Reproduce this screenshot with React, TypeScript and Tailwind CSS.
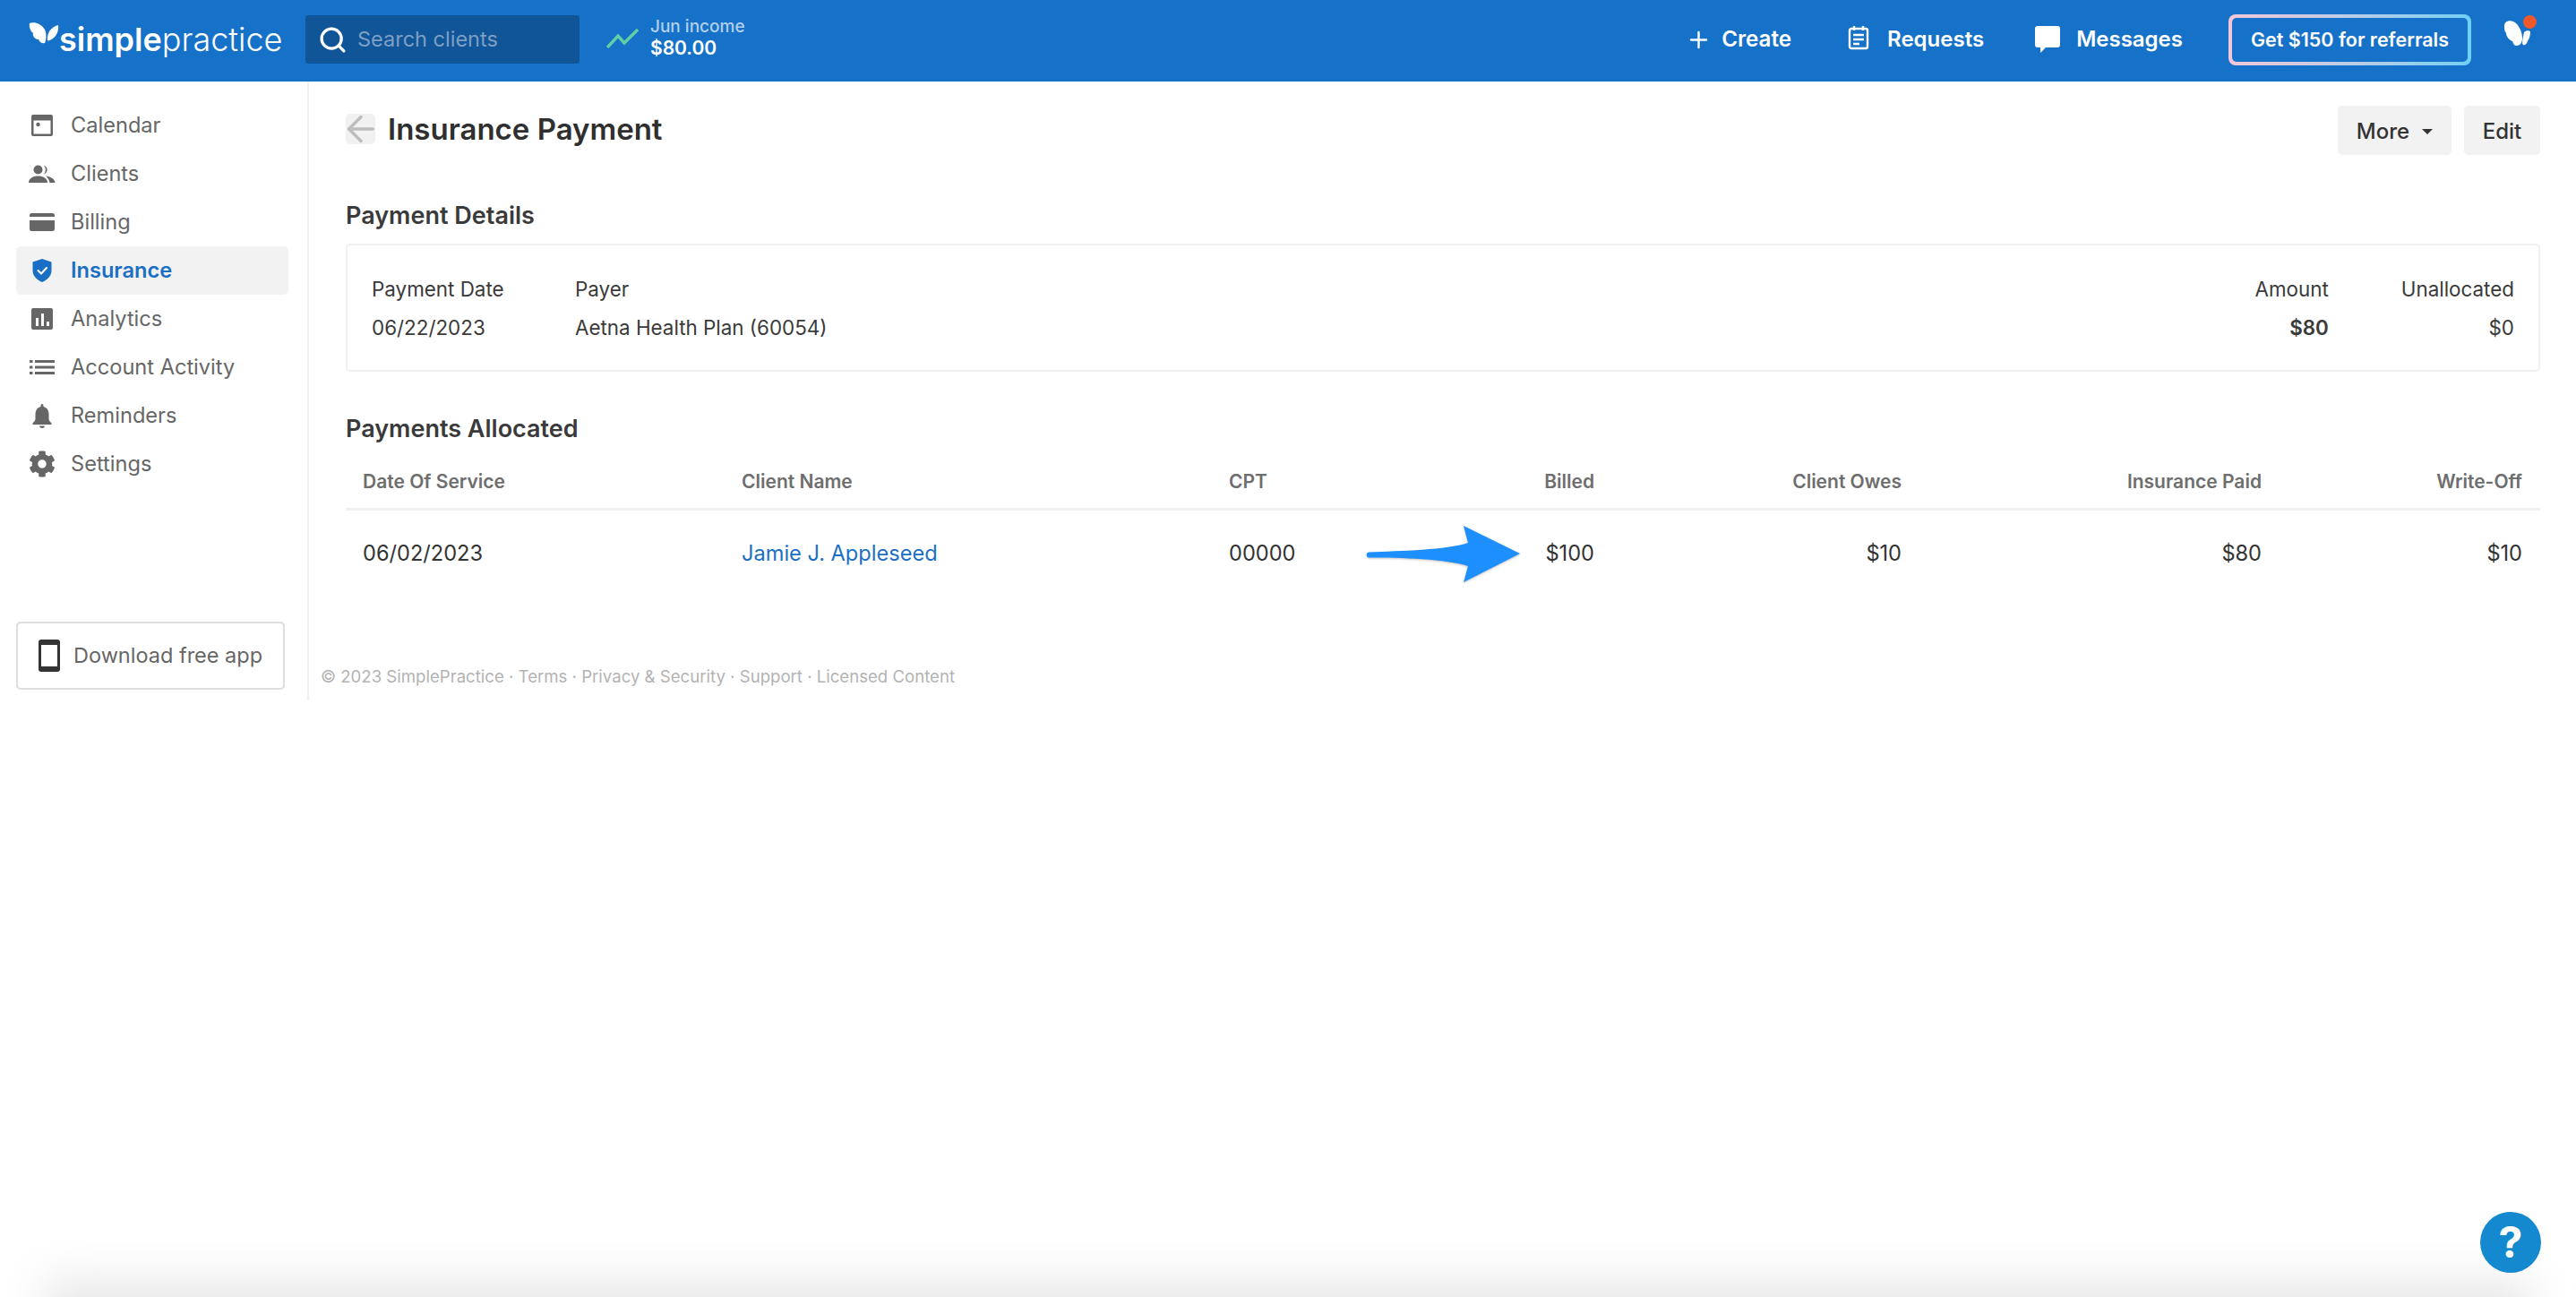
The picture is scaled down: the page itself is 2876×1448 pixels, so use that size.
import React from 'react';
import { Search, Plus, ArrowLeft } from 'lucide-react';

const font = 'font-[Inter,"Liberation_Sans",sans-serif]';

const Butterfly = ({ className }: { className?: string }) => (
  <svg viewBox="0 0 34 24" className={className} fill="currentColor">
    <path d="M1 1 C6 -1 14 1 18 8 C20 12 20 18 18 23 C15 24 12 22 11 19 C7 19 4 15 5 12 C2 10 0 5 1 1 Z" />
    <path d="M21 20 C20 12 25 5 33 3 C34 9 31 15 27 18 C24 20 22 21 21 20 Z" />
  </svg>
);

const CalendarIcon = () => (
  <svg viewBox="0 0 24 24" className="w-[24px] h-[24px]" fill="#666">
    <path fillRule="evenodd" d="M0 2A2 2 0 0 1 2 0h20a2 2 0 0 1 2 2v20a2 2 0 0 1-2 2H2a2 2 0 0 1-2-2zM2.500 6.500V21.500h19V6.500z" />
    <circle cx="7.500" cy="11" r="2.200" />
  </svg>
);

const ClientsIcon = () => (
  <svg viewBox="0 0 30 20" className="w-[30px] h-[20px]" fill="#666">
    <circle cx="10.500" cy="5.500" r="5" />
    <path d="M0 20c0-5 5-7.500 10.500-7.500S21 15 21 20z" />
    <path d="M17 .8a5 5 0 0 1 0 9.600 7 7 0 0 0 0-9.600z" />
    <path d="M19 12.500c5 .5 10 3 10.500 7.500h-6c-.5-3-2-5.500-4.500-7.500z" />
  </svg>
);

const BillingIcon = () => (
  <svg viewBox="0 0 28 20" className="w-[28px] h-[20px]" fill="#666">
    <path fillRule="evenodd" d="M2.500 0h23A2.500 2.500 0 0 1 28 2.500V4H0V2.500A2.500 2.500 0 0 1 2.500 0zM0 8h28v9.500a2.500 2.500 0 0 1-2.500 2.500h-23A2.500 2.500 0 0 1 0 17.500z" />
  </svg>
);

const ShieldIcon = () => (
  <svg viewBox="0 0 22 26" className="w-[22px] h-[26px]">
    <path fill="#1a6fc4" d="M11 0 L21.500 3.500 V13 C21.500 19 17 23.500 11 26 C5 23.500 .5 19 .5 13 V3.500 Z" />
    <path d="M6.500 13 L10 16.500 L16 10" fill="none" stroke="#fff" strokeWidth="2" strokeLinecap="round" strokeLinejoin="round" />
  </svg>
);

const AnalyticsIcon = () => (
  <svg viewBox="0 0 24 24" className="w-[24px] h-[24px]">
    <rect x="0" y="0" width="24" height="24" rx="2" fill="#666" />
    <rect x="5" y="11" width="3" height="9" fill="#fff" />
    <rect x="11" y="6" width="3" height="14" fill="#fff" />
    <rect x="17" y="15" width="3" height="5" fill="#fff" />
  </svg>
);

const ListIcon = () => (
  <svg viewBox="0 0 28 16" className="w-[28px] h-[16px]" fill="#666">
    <rect x="0" y="0" width="3.500" height="3" />
    <rect x="6" y="0" width="22" height="3" />
    <rect x="0" y="6.500" width="3.500" height="3" />
    <rect x="6" y="6.500" width="22" height="3" />
    <rect x="0" y="13" width="3.500" height="3" />
    <rect x="6" y="13" width="22" height="3" />
  </svg>
);

const BellIcon = () => (
  <svg viewBox="0 0 22 27" className="w-[22px] h-[27px]" fill="#666">
    <path d="M9.500 1.500a1.500 1.500 0 0 1 3 0V3c4 1 6 4.500 6 8.500v5c0 2 1.500 3.500 3 5V23H.5v-1.500c1.500-1.500 3-3 3-5v-5c0-4 2-7.500 6-8.500z" />
    <path d="M8 24.500h6c0 1.500-1.500 2.500-3 2.500s-3-1-3-2.500z" />
  </svg>
);

const GearIcon = () => (
  <svg viewBox="0 0 512 512" className="w-[30px] h-[30px]" fill="#666">
    <path d="M487.400 315.700l-42.600-24.600c4.300-23.200 4.300-47 0-70.200l42.600-24.600c4.900-2.800 7.100-8.600 5.500-14-11.100-35.600-30-67.800-54.700-94.600-3.800-4.100-10-5.100-14.800-2.300L380.800 110c-17.900-15.400-38.500-27.300-60.800-35.100V25.800c0-5.600-3.900-10.500-9.400-11.700-36.700-8.200-74.300-7.800-109.200 0-5.500 1.200-9.400 6.100-9.400 11.700V75c-22.200 7.900-42.800 19.800-60.800 35.100L88.700 85.500c-4.900-2.800-11-1.900-14.800 2.300-24.700 26.700-43.600 58.900-54.700 94.600-1.700 5.400.6 11.200 5.500 14L67.300 221c-4.300 23.200-4.300 47 0 70.200l-42.600 24.600c-4.900 2.800-7.100 8.600-5.500 14 11.100 35.600 30 67.800 54.700 94.600 3.800 4.100 10 5.100 14.800 2.300l42.600-24.600c17.900 15.400 38.500 27.300 60.800 35.100v49.200c0 5.600 3.900 10.500 9.400 11.700 36.700 8.200 74.300 7.800 109.200 0 5.500-1.200 9.400-6.100 9.400-11.700v-49.200c22.200-7.900 42.800-19.800 60.800-35.100l42.600 24.600c4.900 2.800 11 1.900 14.800-2.300 24.700-26.700 43.600-58.900 54.700-94.600 1.500-5.500-.7-11.300-5.600-14.100zM256 336c-44.100 0-80-35.900-80-80s35.900-80 80-80 80 35.900 80 80-35.900 80-80 80z" />
  </svg>
);

const navItems = [
  { label: 'Calendar', icon: <CalendarIcon /> },
  { label: 'Clients', icon: <ClientsIcon /> },
  { label: 'Billing', icon: <BillingIcon /> },
  { label: 'Insurance', icon: <ShieldIcon />, active: true },
  { label: 'Analytics', icon: <AnalyticsIcon /> },
  { label: 'Account Activity', icon: <ListIcon /> },
  { label: 'Reminders', icon: <BellIcon /> },
  { label: 'Settings', icon: <GearIcon /> },
];

const Header = () => (
  <header className="h-[91px] pb-[3px] bg-[#1572c8] flex items-center text-white shrink-0">
    {/* logo */}
    <div className="flex w-[341px] pl-[32px] h-full items-center">
      <Butterfly className="w-[34px] h-[24px] -mt-[14px] text-white" />
      <span className="text-[36px] leading-none">
        <span className="font-semibold">simple</span>
        <span className="font-light">practice</span>
      </span>
    </div>
    <div className="w-[306px] h-[54px] bg-[#0f5597] rounded-[3px] flex items-center pl-[14px]">
      <Search className="w-[33px] h-[33px] text-white" strokeWidth={2.400} />
      <span className="ml-[11px] text-[23.500px] text-[#7e9fc4]">Search clients</span>
    </div>
    <svg viewBox="0 0 36 22" className="w-[36px] h-[22px] ml-[30px] -mt-[2px]" fill="none" stroke="#5fd0a5" strokeWidth="3.500">
      <path d="M1 21 L13 8 L20 16 L35 1" />
    </svg>
    <div className="ml-[13px] flex flex-col -mt-[3px]">
      <span className="text-[19px] leading-[22px] font-medium text-[#b3d0ee]">Jun income</span>
      <span className="text-[21px] leading-[26px] font-semibold">$80.00</span>
    </div>
    <div className="ml-auto flex items-center">
      <Plus className="w-[29px] h-[29px]" strokeWidth={2} />
      <span className="ml-[11px] text-[24.200px] font-semibold">Create</span>
      <svg viewBox="0 0 24 28" className="w-[24px] h-[28px] ml-[63px] -mt-[4px]" fill="none" stroke="#fff" strokeWidth="2.400">
        <rect x="2" y="4" width="20" height="22" rx="2" />
        <path d="M7 1v5M17 1v5M6 11h12M6 16h12M6 21h7" />
      </svg>
      <span className="ml-[20px] text-[24px] font-semibold">Requests</span>
      <svg viewBox="0 0 28 30" className="w-[28px] h-[30px] ml-[57px]" fill="#fff">
        <path d="M3 0h22a3 3 0 0 1 3 3v18a3 3 0 0 1-3 3H12l-6 6v-6H3a3 3 0 0 1-3-3V3a3 3 0 0 1 3-3z" />
      </svg>
      <span className="ml-[18px] text-[24px] font-semibold">Messages</span>
      {/* gradient outline */}
      <div className="ml-[51px] w-[271px] h-[57px] rounded-[8px] p-[4px] bg-gradient-to-r from-[#f3c6d8] to-[#6fd0f5]">
        <div className="w-full h-full rounded-[5px] bg-[#1572c8] flex items-center justify-center text-[21.500px] font-semibold">
          Get $150 for referrals
        </div>
      </div>
      <div className="relative ml-[36px] mr-[45px] w-[36px] h-[30px] -mt-[12px]">
        <svg viewBox="0 0 36 30" className="w-[36px] h-[30px]" fill="#fff">
          <path d="M1 6 C1 1 6 -1 11 1 C17 4 21 12 21 20 C21 25 18 28 15 28 C12 28 11 26 10 23 C7 22 3 18 3 14 C1 12 1 9 1 6 Z" />
          <path d="M23 13 C25 11 28 11 30 12 C30 16 29 20 27 23 C26 26 24 28 22 27 C20 26 22 18 23 13 Z" />
        </svg>
        <span className="absolute -top-[6px] left-[22px] w-[15px] h-[15px] rounded-full bg-[#f2592a]" />
      </div>
    </div>
  </header>
);

const Sidebar = () => (
  <aside className="w-[345px] h-[691px] shrink-0 border-r-2 border-[#efefef] flex flex-col pt-[22px] pl-[18px]">
    <nav className="w-[304px] flex flex-col">
      {navItems.map((item) => (
        <div
          key={item.label}
          className={
            item.active
              ? 'h-[54px] flex items-center bg-[#f2f2f2] rounded-[5px] text-[#1a6fc4] font-semibold'
              : 'h-[54px] flex items-center text-[#666]'
          }
        >
          <span className="w-[58px] flex justify-center">{item.icon}</span>
          <span className="ml-[3px] text-[23.600px]">{item.label}</span>
        </div>
      ))}
    </nav>
    <button className="mt-[149px] w-[300px] h-[76px] border-2 border-[#dedede] rounded-[5px] flex items-center pl-[23px] text-[#666] text-[23.500px]">
      <svg viewBox="0 0 24 36" className="w-[24px] h-[36px]">
        <rect width="24" height="36" rx="3" fill="#333" />
        <rect x="3" y="6" width="18" height="24" fill="#fff" />
      </svg>
      <span className="ml-[15px]">Download free app</span>
    </button>
  </aside>
);

const PaymentDetails = () => (
  <>
    <h2 className="mt-[51px] text-[27px] leading-[34px] font-semibold text-[#3a3a3a]">Payment Details</h2>
    <div className="mt-[14px] h-[143px] border-2 border-[#f0f0f0] rounded-[5px] flex pl-[27px] pr-[27px] pt-[34px] text-[22.400px] text-[#3a3a3a]">
      <div className="w-[227px]">
        <div className="leading-[30px]">Payment Date</div>
        <div className="mt-[13px] leading-[30px]">06/22/2023</div>
      </div>
      <div>
        <div className="leading-[30px]">Payer</div>
        <div className="mt-[13px] leading-[30px]">Aetna Health Plan (60054)</div>
      </div>
      <div className="ml-auto text-right">
        <div className="leading-[30px]">Amount</div>
        <div className="mt-[13px] leading-[30px] font-semibold">$80</div>
      </div>
      <div className="ml-[81px] text-right">
        <div className="leading-[30px]">Unallocated</div>
        <div className="mt-[13px] leading-[30px]">$0</div>
      </div>
    </div>
  </>
);

const PaymentsTable = () => (
  <>
    <h2 className="mt-[47px] text-[27px] leading-[34px] font-semibold text-[#3a3a3a]">Payments Allocated</h2>
    <div className="mt-[12px] h-[62px] pl-[19px] border-b-[3px] border-[#f0f0f0] grid grid-cols-[423px_544px_200px_208px_343px_402px_291px] items-center text-[21px] font-semibold text-[#6e6e6e]">
      <div>Date Of Service</div>
      <div>Client Name</div>
      <div>CPT</div>
      <div className="text-right">Billed</div>
      <div className="text-right">Client Owes</div>
      <div className="text-right">Insurance Paid</div>
      <div className="text-right">Write-Off</div>
    </div>
    <div className="relative h-[96px] pl-[19px] grid grid-cols-[423px_544px_200px_208px_343px_402px_291px] items-center text-[23.600px] text-[#333]">
      <div>06/02/2023</div>
      <div className="text-[#1a6fc4]">Jamie J. Appleseed</div>
      <div>00000</div>
      <div className="text-right">$100</div>
      <div className="text-right">$10</div>
      <div className="text-right">$80</div>
      <div className="text-right">$10</div>
      {/* annotation arrow */}
      <svg viewBox="0 0 174 66" className="absolute left-[1139px] top-[16px] w-[174px] h-[66px] drop-shadow-[0_1px_1px_rgba(0,0,0,0.25)]">
        <path fill="#1e8fff" d="M3 30.500 C40 29 90 28 114 20 L109 1 L172 32 L109 64 L114 46 C90 38 40 36.500 3 36.500 C0 36 0 31 3 30.500 Z" />
      </svg>
    </div>
  </>
);

export default function App() {
  return (
    <div className={`relative min-h-screen h-[1448px] overflow-hidden bg-white flex flex-col ${font}`}>
      <Header />
      <div className="flex">
        <Sidebar />
        <main className="w-[2531px] shrink-0">
          <div className="pl-[41px] pr-[40px]">
            <div className="flex items-start">
              <button className="mt-[36px] w-[33px] h-[34px] bg-[#f1f1f1] rounded-[5px] flex items-center justify-center">
                <ArrowLeft className="w-[46px] h-[46px] shrink-0 text-[#bdbdbd]" strokeWidth={1.800} />
              </button>
              <h1 className="mt-[33px] ml-[14px] text-[33px] leading-[40px] font-semibold text-[#2f2f2f]">Insurance Payment</h1>
              <div className="ml-auto mt-[27px] flex gap-[14px] text-[24px] font-medium text-[#333]">
                <button className="w-[127px] h-[55px] pt-[2px] bg-[#f2f2f2] rounded-[5px] flex items-center justify-center">
                  More
                  <span className="ml-[14px] w-0 h-0 border-x-[6px] border-x-transparent border-t-[6px] border-t-[#333]" />
                </button>
                <button className="w-[85px] h-[55px] pt-[2px] bg-[#f2f2f2] rounded-[5px]">Edit</button>
              </div>
            </div>
            <PaymentDetails />
            <PaymentsTable />
          </div>
          <footer className="ml-[13px] mt-[77px] text-[18.600px] leading-[24px] text-[#b3b3b3]">
            © 2023 SimplePractice · Terms · Privacy &amp; Security · Support · Licensed Content
          </footer>
        </main>
      </div>
      {/* bottom fade and help bubble */}
      <div className="absolute bottom-[-60px] left-[50px] right-[50px] h-[80px] bg-[#e8e8e8] blur-[24px]" />
      <button className="absolute left-[2769px] top-[1353px] w-[68px] h-[68px] rounded-full bg-[#1589cf] text-white text-[48px] font-bold leading-none flex items-center justify-center">
        ?
      </button>
    </div>
  );
}
